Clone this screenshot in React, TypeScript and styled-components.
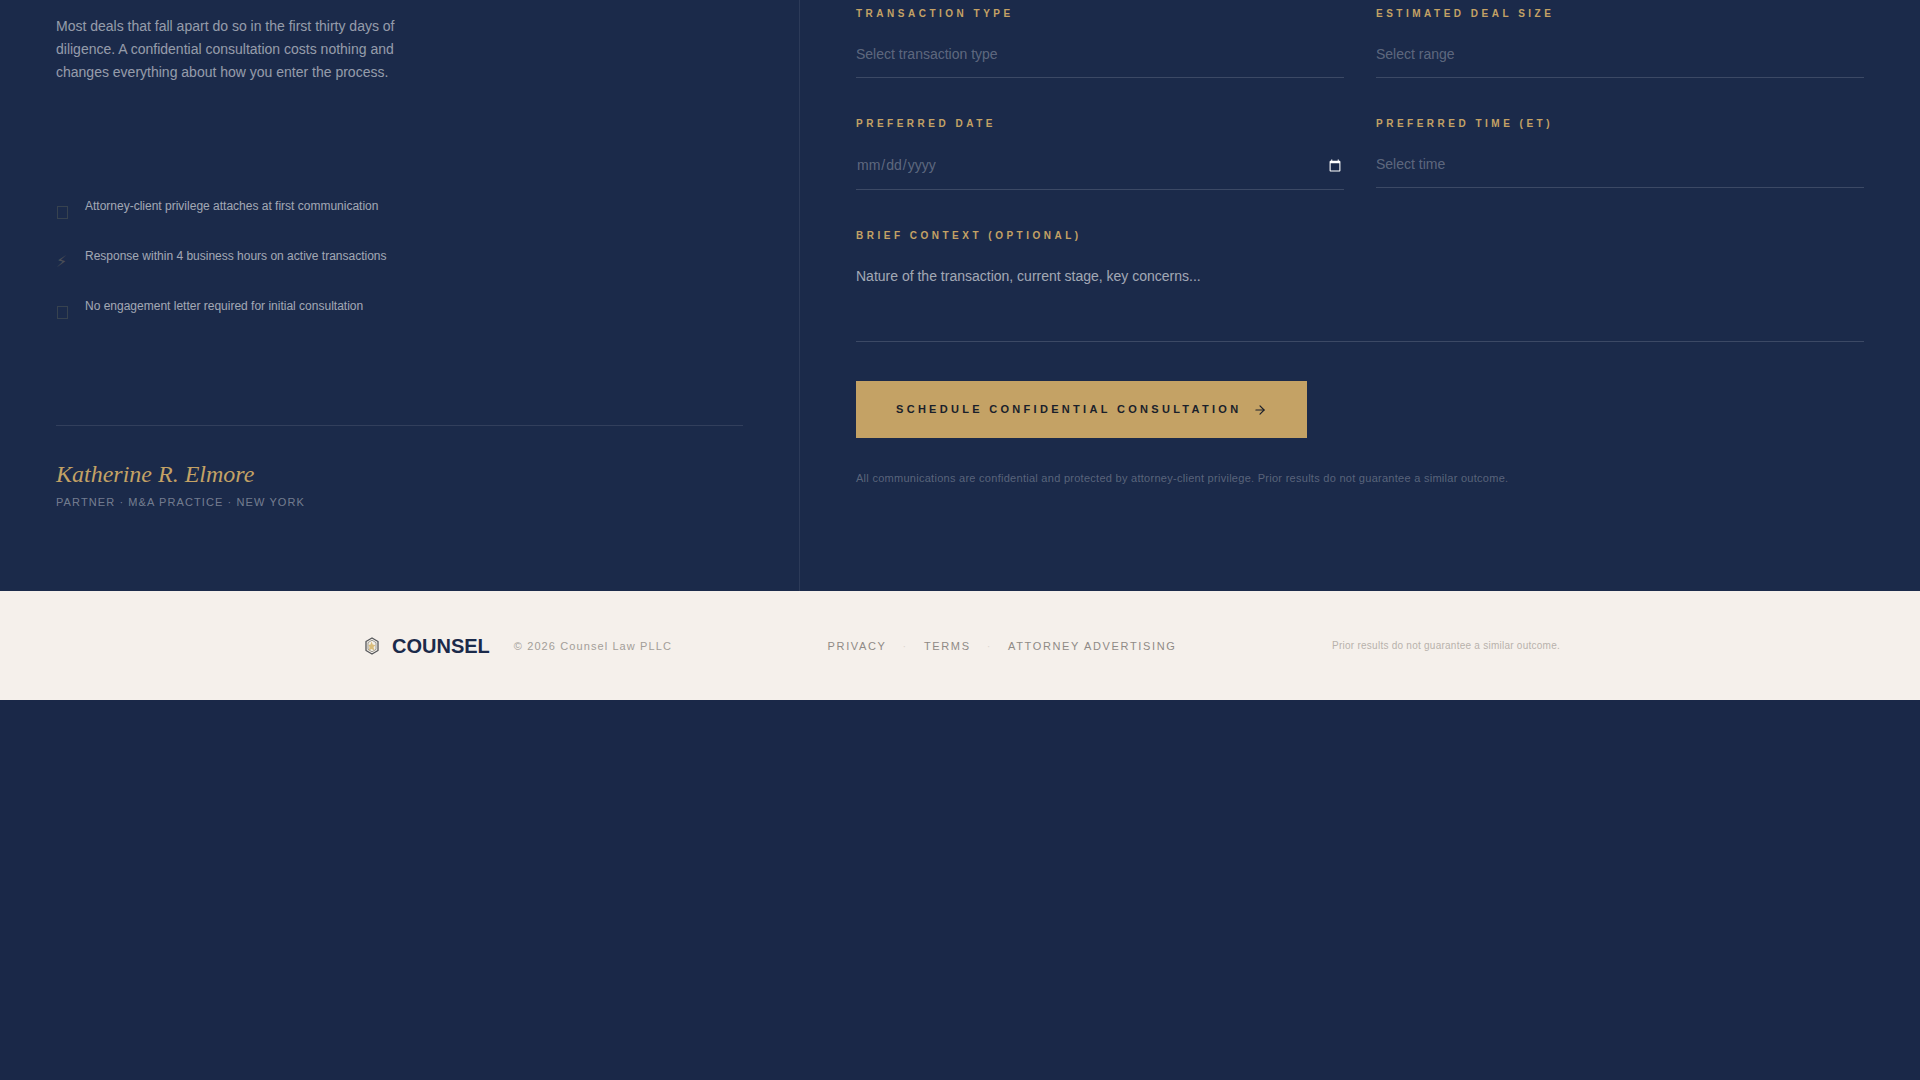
import React from "react";
import styled, { createGlobalStyle, css } from "styled-components";
import { ArrowRight } from "lucide-react";

const sans = `"Liberation Sans", Arial, sans-serif`;
const serif = `"Liberation Serif", "Times New Roman", serif`;
const gold = "#c4a265";
const navy = "#1b2a4a";

const GlobalStyle = createGlobalStyle`
  *, *::before, *::after { box-sizing: border-box; }
  body { margin: 0; background: #1a2848; font-family: ${sans}; }
`;

const Booking = styled.section`
  display: grid;
  grid-template-columns: 5fr 7fr;
  background: ${navy};
`;

const Pitch = styled.div`
  padding: 15px 56px 80px;
  border-right: 1px solid rgba(255, 255, 255, 0.08);
`;

const Lead = styled.p`
  max-width: 360px;
  margin: 0 0 112px;
  font-size: 14px;
  line-height: 23px;
  color: rgba(255, 255, 255, 0.55);
`;

const Assurances = styled.ul`
  display: grid;
  gap: 18px;
  margin: 0 0 97px;
  padding: 0;
  list-style: none;
`;

const Assurance = styled.li`
  display: flex;
  align-items: flex-start;
  gap: 16px;
  font-size: 12px;
  line-height: 20px;
  color: rgba(255, 255, 255, 0.6);
`;

const AssuranceIcon = styled.span`
  display: flex;
  flex: none;
  align-items: center;
  width: 13px;
  height: 32px;
  font-family: "DejaVu Sans", sans-serif;
  font-size: 16px;
  line-height: 32px;
  color: #4b4f57;
`;

const Signature = styled.div`
  padding-top: 32px;
  border-top: 1px solid rgba(255, 255, 255, 0.1);
`;

const SignName = styled.p`
  margin: 0 0 4px;
  font-family: ${serif};
  font-style: italic;
  font-size: 24px;
  line-height: 32px;
  color: ${gold};
`;

const SignRole = styled.p`
  margin: 0;
  font-size: 11px;
  line-height: 17px;
  letter-spacing: 0.1em;
  text-transform: uppercase;
  color: rgba(255, 255, 255, 0.4);
`;

const Form = styled.form`
  padding: 8px 56px 80px;
`;

const Fields = styled.div`
  display: grid;
  grid-template-columns: 1fr 1fr;
  align-items: start;
  gap: 40px 32px;
`;

const Field = styled.div<{ $wide?: boolean }>`
  display: grid;
  gap: 12px;
  ${(p) => p.$wide && css`grid-column: 1 / -1;`}
`;

const Label = styled.label`
  font-size: 10px;
  font-weight: 700;
  line-height: 12px;
  letter-spacing: 0.35em;
  text-transform: uppercase;
  color: ${gold};
`;

const control = css`
  display: block;
  width: 100%;
  margin: 0;
  padding: 14px 0;
  border: 0;
  border-bottom: 1px solid rgba(255, 255, 255, 0.15);
  border-radius: 0;
  outline: 0;
  background: transparent;
  font-family: ${sans};
  font-size: 14px;
  line-height: 17px;
  color: rgba(255, 255, 255, 0.3);
`;

const Select = styled.select`
  ${control}
  appearance: none;
  height: 46px;
`;

const DateInput = styled.input`
  ${control}
  height: 48px;
  &::-webkit-calendar-picker-indicator { filter: invert(1); }
`;

const TextArea = styled.textarea`
  ${control}
  height: 88px;
  resize: none;
  &::placeholder { color: rgba(255, 255, 255, 0.6); }
`;

const Submit = styled.button`
  display: inline-flex;
  align-items: center;
  gap: 12px;
  margin: 39px 0 32px;
  padding: 20px 40px;
  border: 0;
  background: ${gold};
  font-family: ${sans};
  font-size: 11px;
  font-weight: 700;
  line-height: 17px;
  letter-spacing: 0.3em;
  text-transform: uppercase;
  color: #1a1f2b;
`;

const Disclaimer = styled.p`
  margin: 0;
  font-size: 11px;
  line-height: 16px;
  letter-spacing: 0.025em;
  color: rgba(255, 255, 255, 0.28);
`;

const Footer = styled.footer`
  padding: 41px 32px 40px;
  background: #f5f0eb;
`;

const FooterInner = styled.div`
  display: flex;
  align-items: center;
  justify-content: space-between;
  max-width: 1200px;
  margin: 0 auto;
  line-height: 28px;
`;

const Brand = styled.div`
  display: flex;
  align-items: center;
  gap: 24px;
`;

const Logo = styled.div`
  display: flex;
  align-items: center;
  gap: 8px;
  font-size: 20px;
  font-weight: 700;
  color: ${navy};
`;

const Copyright = styled.span`
  font-size: 11px;
  letter-spacing: 0.1em;
  color: #a39e99;
`;

const Legal = styled.nav`
  display: flex;
  align-items: center;
  gap: 16px;
  font-size: 11px;
  letter-spacing: 0.15em;
  text-transform: uppercase;
  color: #ddd7d1;
`;

const LegalLink = styled.a`
  text-decoration: none;
  color: #8f8a86;
`;

const Notice = styled.span`
  font-size: 10px;
  line-height: 24px;
  letter-spacing: 0.025em;
  color: #b8b2ac;
`;

const Mark = () => (
  <svg width="24" height="24" viewBox="0 0 24 24" fill="none" aria-hidden="true">
    <path d="M12 4 18 7.500v9L12 20l-6-3.500v-9z" stroke="#55575a" strokeWidth="1.300" strokeLinejoin="round" />
    <path d="M12 6.200 16 8.600v6.800L12 17.800l-4-2.400V8.600z" fill="#f3efe8" stroke="#77776f" strokeWidth="0.700" />
    <path d="m11.500 7.500 1.200 3 2.800.8-2 1.700.9 3.500-2.900-1.600-2.600 1.600.6-3.500-1.200-2 2.200-.5z" fill="#d9bd7c" />
  </svg>
);

const Outline = () => (
  <svg width="13" height="14" viewBox="0 0 13 14" fill="none">
    <rect x="1.500" y="1.500" width="10" height="12" stroke="#37424f" />
  </svg>
);

export default function App() {
  return (
    <>
      <GlobalStyle />
      <main>
        <Booking>
          <Pitch>
            <Lead>
              Most deals that fall apart do so in the first thirty days of diligence. A confidential
              consultation costs nothing and changes everything about how you enter the process.
            </Lead>
            <Assurances>
              <Assurance>
                <AssuranceIcon aria-hidden="true"><Outline /></AssuranceIcon>
                Attorney-client privilege attaches at first communication
              </Assurance>
              <Assurance>
                <AssuranceIcon aria-hidden="true">{"\u26A1\uFE0E"}</AssuranceIcon>
                Response within 4 business hours on active transactions
              </Assurance>
              <Assurance>
                <AssuranceIcon aria-hidden="true"><Outline /></AssuranceIcon>
                No engagement letter required for initial consultation
              </Assurance>
            </Assurances>
            <Signature>
              <SignName>Katherine R. Elmore</SignName>
              <SignRole>Partner · M&amp;A Practice · New York</SignRole>
            </Signature>
          </Pitch>
          <Form onSubmit={(e) => e.preventDefault()}>
            <Fields>
              <Field>
                <Label htmlFor="type">Transaction Type</Label>
                <Select id="type"><option>Select transaction type</option></Select>
              </Field>
              <Field>
                <Label htmlFor="size">Estimated Deal Size</Label>
                <Select id="size"><option>Select range</option></Select>
              </Field>
              <Field>
                <Label htmlFor="date">Preferred Date</Label>
                <DateInput id="date" type="date" />
              </Field>
              <Field>
                <Label htmlFor="time">Preferred Time (ET)</Label>
                <Select id="time"><option>Select time</option></Select>
              </Field>
              <Field $wide>
                <Label htmlFor="context">Brief Context (Optional)</Label>
                <TextArea id="context" placeholder="Nature of the transaction, current stage, key concerns..." />
              </Field>
            </Fields>
            <Submit type="submit">
              Schedule Confidential Consultation
              <ArrowRight size={14} aria-hidden="true" />
            </Submit>
            <Disclaimer>
              All communications are confidential and protected by attorney-client privilege. Prior
              results do not guarantee a similar outcome.
            </Disclaimer>
          </Form>
        </Booking>
      </main>
      <Footer>
        <FooterInner>
          <Brand>
            <Logo><Mark />COUNSEL</Logo>
            <Copyright>© 2026 Counsel Law PLLC</Copyright>
          </Brand>
          <Legal aria-label="Legal">
            <LegalLink href="#privacy">Privacy</LegalLink>
            <span>·</span>
            <LegalLink href="#terms">Terms</LegalLink>
            <span>·</span>
            <LegalLink href="#advertising">Attorney Advertising</LegalLink>
          </Legal>
          <Notice>Prior results do not guarantee a similar outcome.</Notice>
        </FooterInner>
      </Footer>
    </>
  );
}
